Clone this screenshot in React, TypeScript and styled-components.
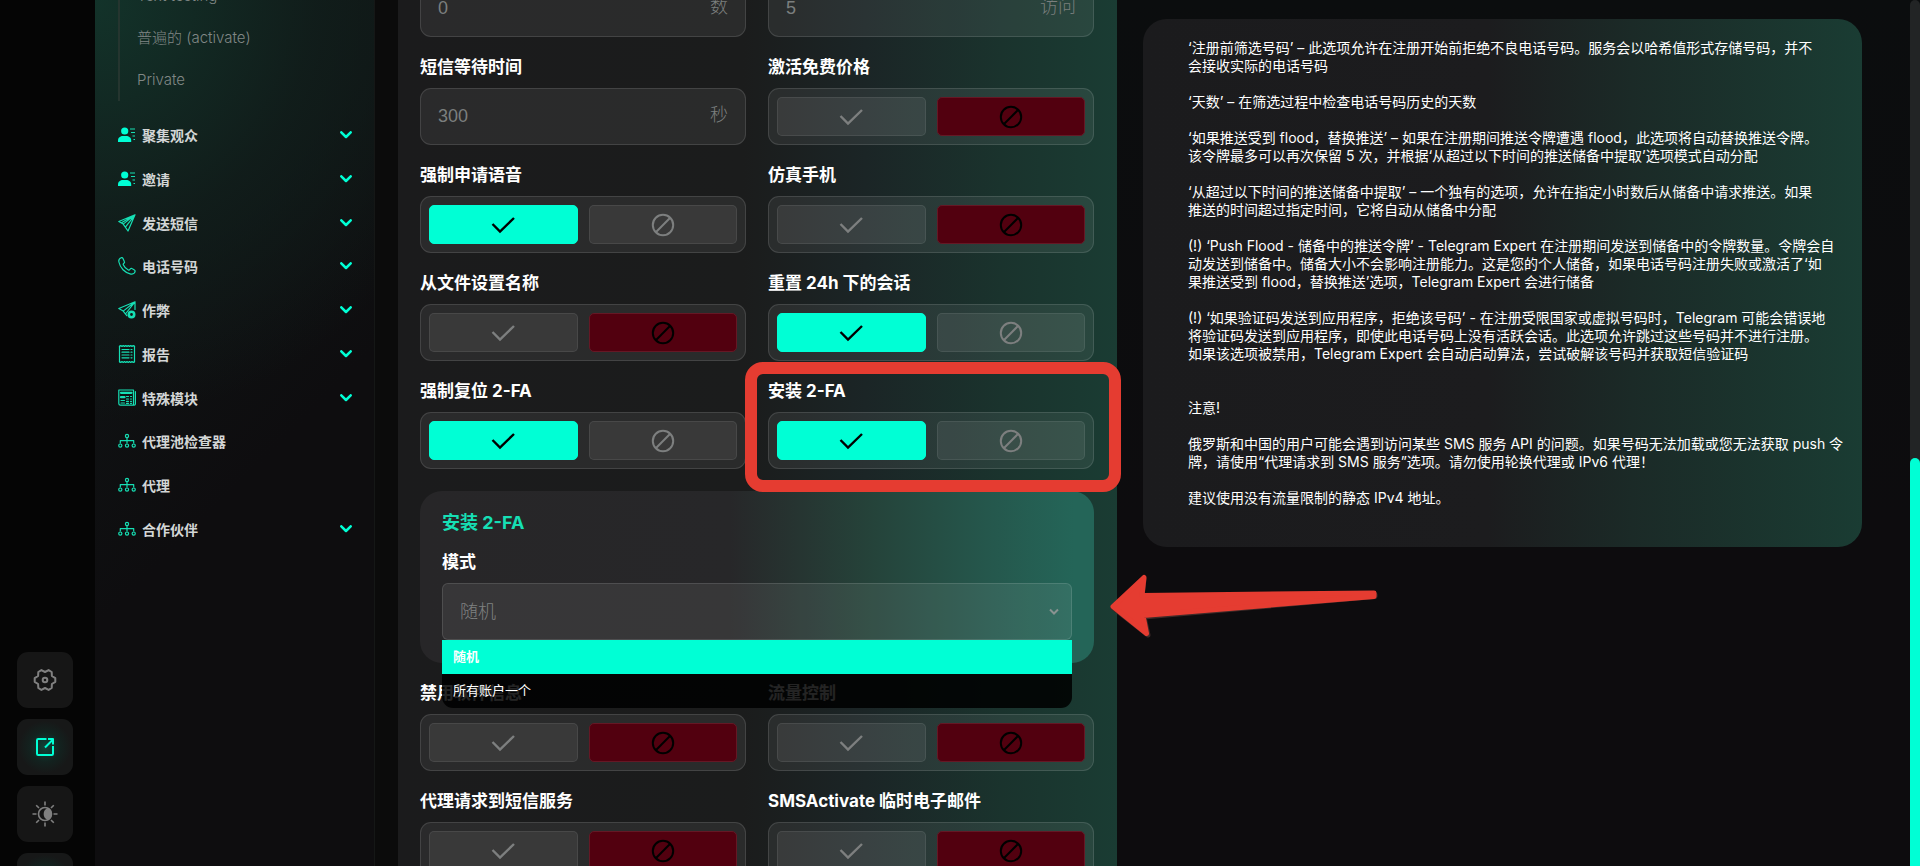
import React, { useId, useState } from "react";
import styled, { createGlobalStyle, css } from "styled-components";

const accent = "#00ffd5";
const accentSoft = "#16dfb4";
const sans = `Inter, "Noto Sans CJK SC", sans-serif`;

const GlobalStyle = createGlobalStyle`
  *, *::before, *::after { box-sizing: border-box; }
  body { margin: 0; background: #0c0d0e; color: #fff; font-family: ${sans}; }
  button, input, select { font-family: inherit; }
`;

/* ---------- shell ---------- */

const Page = styled.div`
  display: flex;
  height: 100vh;
  overflow: hidden;
  background: linear-gradient(180deg, #0b0d0e 0%, #0d0c0e 60%);
`;

const Rail = styled.aside`
  display: flex;
  flex-direction: column;
  flex: 0 0 95px;
  justify-content: flex-end;
  align-items: flex-start;
  gap: 11px;
  padding-left: 17px;
  background: #050505;
`;

const RailButton = styled.button<{ $active?: boolean; $cut?: boolean }>`
  display: grid;
  place-items: center;
  flex: none;
  width: 56px;
  height: 56px;
  margin-bottom: ${(p) => (p.$cut ? "-43px" : "0")};
  padding: 0;
  border: 0;
  border-radius: 11px;
  color: ${(p) => (p.$active ? accent : "#808080")};
  background: ${(p) =>
    p.$active
      ? "radial-gradient(circle, #104237 0%, #13221f 38%, #171818 66%)"
      : "#161616"};
`;

const Sidebar = styled.nav`
  flex: 0 0 280px;
  padding: 0 22px 0 23px;
  border-right: 1px solid #151716;
  background:
    radial-gradient(ellipse 400px 420px at 0 0, #13332a 0%, rgba(17, 31, 28, 0.8) 55%, rgba(15, 15, 17, 0) 100%),
    linear-gradient(135deg, #101615 0%, #0f1213 30%, #0e0d0f 55%);
`;

const SubList = styled.ul`
  margin: -25px 0 15px;
  padding: 0 0 0 17px;
  border-left: 2px solid #25352f;
  list-style: none;
`;

const SubLink = styled.a`
  display: block;
  color: #808785;
  font-size: 15px;
  font-weight: 300;
  line-height: 42px;
  text-decoration: none;
`;

const NavList = styled.ul`
  display: flex;
  flex-direction: column;
  justify-content: space-between;
  height: 432px;
  margin: 0;
  padding: 0;
  list-style: none;
`;

const NavLink = styled.a`
  display: flex;
  align-items: center;
  gap: 6px;
  height: 38px;
  color: #d3d6d6;
  font-size: 14px;
  font-weight: 700;
  text-decoration: none;

  svg { flex: none; color: ${accentSoft}; }
  span { flex: 1; }
`;

const Gutter = styled.div`
  flex: 0 0 23px;
  background: #0b0b0b;
`;

const Main = styled.main`
  display: grid;
  flex: 1;
  grid-template-columns: repeat(2, minmax(0, 1fr));
  align-items: start;
  gap: 26px;
  min-width: 0;
  padding-right: 48px;
`;

const ScrollTrack = styled.div`
  flex: 0 0 10px;
  padding-top: 458px;
  border-radius: 5px 5px 0 0;
  background: #222425;
`;

const ScrollThumb = styled.div`
  height: 100%;
  border-radius: 5px 5px 0 0;
  background: ${accent};
`;

/* ---------- form ---------- */

const FormPanel = styled.form`
  display: grid;
  grid-template-columns: repeat(2, minmax(0, 1fr));
  align-items: start;
  gap: 22px;
  margin-top: -20px;
  padding: 0 23px 22px 22px;
  background: linear-gradient(90deg, #1b1b1c 0%, #1b1c1c 48%, #1b2526 65%, #1a332d 84%, #1a3c33 100%);
`;

const Field = styled.div`
  position: relative;
  display: flex;
  flex-direction: column;
  gap: 12px;
`;

const labelText = css`
  color: #fff;
  font-size: 17px;
  font-weight: 700;
  line-height: 17px;
  white-space: nowrap;
`;

const FieldLabel = styled.label`${labelText}`;
const GroupLabel = styled.div`${labelText}`;

const box = css`
  height: 57px;
  border: 1px solid rgba(255, 255, 255, 0.12);
  border-radius: 11px;
  background: rgba(255, 255, 255, 0.065);
`;

const InputBox = styled.div`
  ${box}
  display: flex;
  align-items: center;
  padding: 0 17px;
  color: #7b7f7e;
  font-family: "Liberation Sans", "Noto Sans CJK SC", sans-serif;
  font-size: 18px;
  font-weight: 300;
`;

const Unit = styled.span`
  padding-bottom: 3px;
  line-height: 20px;
`;

const TextInput = styled.input`
  flex: 1;
  min-width: 0;
  padding: 0;
  border: 0;
  outline: 0;
  background: none;
  color: inherit;
  font-size: 18px;
  &::placeholder { color: inherit; opacity: 1; }
`;

const ToggleBox = styled.div`
  ${box}
  display: grid;
  grid-template-columns: 1fr 1fr;
  gap: 11px;
  padding: 8px;
`;

const ToggleOption = styled.label<{ $state: "off" | "yes" | "no" }>`
  position: relative;
  display: grid;
  place-items: center;
  border: 1px solid transparent;
  border-radius: 5px;
  cursor: pointer;

  ${(p) =>
    p.$state === "yes"
      ? css`color: #000; border-color: ${accent}; background: ${accent};`
      : p.$state === "no"
      ? css`color: #000; border-color: #651825; background: #52000f;`
      : css`color: #7d7f7f; border-color: rgba(255, 255, 255, 0.08); background: rgba(255, 255, 255, 0.07);`}

  input {
    position: absolute;
    inset: 0;
    margin: 0;
    opacity: 0;
    cursor: pointer;
  }
`;

const Highlight = styled.div`
  position: absolute;
  z-index: 3;
  inset: -21px -27px -23px -23px;
  border: 12px solid #e53c31;
  border-radius: 18px;
  pointer-events: none;
`;

const Card = styled.section`
  grid-column: 1 / -1;
  display: flex;
  flex-direction: column;
  gap: 22px;
  padding: 22px 22px 23px;
  border-radius: 22px;
  background: linear-gradient(90deg, #272628 0%, #272729 46%, #25433a 67%, #25584d 85%, #246558 97%);
`;

const CardTitle = styled.h2`
  margin: 0;
  color: ${accentSoft};
  font-size: 18px;
  font-weight: 700;
  line-height: 19px;
`;

const SelectWrap = styled.div`
  position: relative;
  > svg {
    position: absolute;
    top: 25px;
    right: 13px;
    color: #8a9391;
    pointer-events: none;
  }
`;

const Select = styled.select`
  display: block;
  width: 100%;
  height: 57px;
  padding: 0 17px;
  appearance: none;
  border: 1px solid rgba(255, 255, 255, 0.12);
  border-radius: 6px;
  outline: 0;
  background: rgba(255, 255, 255, 0.075);
  color: #7f8181;
  font-size: 18px;
  font-weight: 300;
`;

const Options = styled.div`
  position: absolute;
  z-index: 2;
  top: 100%;
  right: 0;
  left: 0;
  overflow: hidden;
  border-radius: 0 0 11px 11px;
`;

const Option = styled.div<{ $selected: boolean }>`
  padding: 0 11px 2px;
  background: ${(p) => (p.$selected ? accent : "rgba(0, 0, 0, 0.86)")};
  color: #fff;
  font-size: 13px;
  font-weight: ${(p) => (p.$selected ? 700 : 400)};
  line-height: 32px;
`;

/* ---------- notes ---------- */

const Notes = styled.article`
  margin-top: 19px;
  padding: 20px 20px 22px 45px;
  border-radius: 24px;
  background: linear-gradient(90deg, #1b1b1d 0%, #1c1c1e 48%, #1b2a27 68%, #1a3c33 100%);
  font-size: 14px;
  line-height: 18px;
  white-space: nowrap;

  p { margin: 0 0 18px; }
  p.gap { margin-bottom: 36px; }
`;

const Arrow = styled.svg`
  position: absolute;
  z-index: 4;
  top: 574px;
  left: calc(50% + 150px);
`;

/* ---------- drawings ---------- */

const Stroke = ({ s = 18, w = 1, children }: { s?: number; w?: number; children: React.ReactNode }) => (
  <svg width={s} height={s} viewBox="0 0 18 18" fill="none" stroke="currentColor" strokeWidth={w} strokeLinejoin="round" strokeLinecap="round" aria-hidden="true">
    {children}
  </svg>
);

const icons = {
  people: (
    <svg width="18" height="18" viewBox="0 0 18 18" fill={accent} aria-hidden="true">
      <circle cx="6.7" cy="5" r="3.6" />
      <path d="M0 16v-1.400c0-3 2.300-4.600 5-4.600h3.200c2.700 0 5 1.600 5 4.600V16z" />
      <path d="M12 3h5M13 6.500h4M14.500 10h2.500M15.500 13.500h1.500" stroke={accentSoft} strokeWidth="1.200" />
    </svg>
  ),
  plane: (
    <Stroke w={1.2}><path d="M17 .8.800 7.500l4.400 2.600L10 17 17 .8zM17 .8 5.200 10.100M17 .8 7.400 13.200M17 .8 3.500 8.800" /></Stroke>
  ),
  phone: (
    <Stroke w={1.2}><path d="M3.300.7C1.500 1.300.5 3 .9 5c1.200 5.800 5.800 10.800 11.900 12.100 2 .3 4-.8 4.300-2.700.1-.6-.2-1.100-.7-1.400l-2.500-1.400c-.5-.3-1.100-.2-1.500.2l-1 1c-.3.300-.7.400-1.100.2C7.900 11.800 6.300 10 5.300 7.700c-.2-.4-.1-.8.200-1.100l.6-.6c.4-.4.500-1 .2-1.500L5 1.500C4.700.8 4 .5 3.300.7z" /></Stroke>
  ),
  planePlus: (
    <Stroke w={1.2}>
      <path d="M17 .8.800 7.500l4.400 2.600 3.600 4.600M17 .8 5.200 10.100M17 .8 7.400 13M17 .8v7.700" />
      <circle cx="13.500" cy="13.500" r="2.700" strokeWidth="2.600" />
    </Stroke>
  ),
  report: (
    <Stroke w={1.2}>
      <path d="M1.500 1v16M16.500 1v16" />
      <path d="M1.500 1.500l1.250-1 1.250 1 1.250-1 1.250 1 1.250-1L9 1.500l1.250-1 1.250 1 1.250-1 1.250 1 1.250-1 1.250 1M1.500 16.500l1.250 1 1.250-1 1.250 1 1.250-1 1.250 1L9 16.500l1.250 1 1.250-1 1.250 1 1.250-1 1.250 1 1.250-1" />
      <path d="M4 4.500h7M4 7.200h7M4 10h7M4 12.800h7M13 4.500h1M13 7.200h1M13 10h1M13 12.800h1" />
    </Stroke>
  ),
  modules: (
    <Stroke w={1.2}>
      <path d="M15.500 15.500V1H.8v13.500c0 1 .7 1.700 1.700 1.700h13.700c.7 0 1.200-.5 1.200-1.200V2.500" />
      <path d="M3 3.800h10.500M3 8.200h3.500" strokeWidth="2.200" />
      <path d="M3 11.500h3.500M3 14h3.500M8.500 7.500h2M8.500 10h2M8.500 12.300h2M8.500 14.300h2M12.500 7.500h1M12.500 10h1M12.500 12.300h1M12.500 14.300h1" />
    </Stroke>
  ),
  tree: (
    <Stroke w={1.2}>
      <circle cx="9" cy="4" r="1.600" />
      <path d="M9 5.600v5.400M2.300 11V8.600h13.400V11" />
      <circle cx="2.300" cy="13.600" r="1.600" />
      <circle cx="9" cy="13.600" r="1.600" />
      <circle cx="15.700" cy="13.600" r="1.600" />
    </Stroke>
  ),
};

const NavChevron = () => (
  <svg width="12" height="8" viewBox="0 0 12 8" fill="none" stroke={accent} strokeWidth="2.500" strokeLinecap="round" strokeLinejoin="round" aria-hidden="true">
    <path d="M1.300 1.300 6 6l4.700-4.700" />
  </svg>
);

const CheckIcon = () => (
  <svg width="24" height="18" viewBox="0 0 24 18" fill="none" stroke="currentColor" strokeWidth="2.400" aria-hidden="true">
    <path d="M1.500 8 9 15.500 23 2" />
  </svg>
);

const BanIcon = () => (
  <svg width="24" height="24" viewBox="0 0 24 24" fill="none" stroke="currentColor" strokeWidth="2" aria-hidden="true">
    <circle cx="12" cy="12" r="10.200" />
    <path d="M4.800 19.200 19.200 4.800" />
  </svg>
);

const GearIcon = () => (
  <svg width="24" height="24" viewBox="0 0 24 24" fill="none" stroke="currentColor" strokeWidth="2" strokeLinejoin="round" aria-hidden="true">
    <path d="M22.300 13.800 18.900 16l-.2 4-3.100 1.900L12 20l-3.600 1.900L5.300 20l-.2-4-3.400-2.200v-3.600L5.100 8l.2-4 3.100-1.900L12 4l3.600-1.900L18.700 4l.2 4 3.400 2.200z" />
    <circle cx="12" cy="12" r="2.300" />
  </svg>
);

const ShareIcon = () => (
  <svg width="20" height="20" viewBox="0 0 20 20" fill="none" stroke="currentColor" strokeWidth="2" strokeLinejoin="round" aria-hidden="true">
    <path d="M11.500 2H3.200C2.500 2 2 2.500 2 3.200v13.600c0 .7.500 1.200 1.200 1.200h13.600c.7 0 1.200-.5 1.200-1.200V9M10 10.500 17.500 3M13 2h5v5.500" />
  </svg>
);

const ThemeIcon = () => (
  <svg width="26" height="26" viewBox="0 0 26 26" fill="none" stroke="currentColor" strokeWidth="1.600" aria-hidden="true">
    <circle cx="13" cy="13" r="6.500" />
    <path d="M16.200 7.700a6.500 6.500 0 0 1 0 10.600c-5-1.800-5-8.800 0-10.600z" fill="currentColor" />
    <path d="M13 .5v4M13 21.500v4M.5 13h4M21.500 13h4M4.200 4.200 7 7M19 19l2.800 2.800M21.800 4.200 19 7M7 19l-2.800 2.800" />
  </svg>
);

/* ---------- parts ---------- */

function InputField({ label, name, value, unit }: { label?: string; name: string; value: string; unit: string }) {
  const id = useId();
  return (
    <Field>
      {label && <FieldLabel htmlFor={id}>{label}</FieldLabel>}
      <InputBox>
        <TextInput id={id} name={name} placeholder={value} aria-label={label ? undefined : unit} />
        <Unit>{unit}</Unit>
      </InputBox>
    </Field>
  );
}

function ToggleField({ label, initial, highlighted }: { label: string; initial: boolean; highlighted?: boolean }) {
  const id = useId();
  const [on, setOn] = useState(initial);
  return (
    <Field>
      <GroupLabel id={id}>{label}</GroupLabel>
      <ToggleBox role="radiogroup" aria-labelledby={id}>
        <ToggleOption $state={on ? "yes" : "off"}>
          <input type="radio" name={id} aria-label="是" checked={on} onChange={() => setOn(true)} />
          <CheckIcon />
        </ToggleOption>
        <ToggleOption $state={on ? "off" : "no"}>
          <input type="radio" name={id} aria-label="否" checked={!on} onChange={() => setOn(false)} />
          <BanIcon />
        </ToggleOption>
      </ToggleBox>
      {highlighted && <Highlight />}
    </Field>
  );
}

const modes = ["随机", "所有账户一个"];

function ModeCard() {
  const [mode, setMode] = useState(modes[0]);
  return (
    <Card>
      <CardTitle>安装 2-FA</CardTitle>
      <Field>
        <FieldLabel htmlFor="mode">模式</FieldLabel>
        <SelectWrap>
          <Select id="mode" value={mode} onChange={(e) => setMode(e.target.value)}>
            {modes.map((m) => <option key={m}>{m}</option>)}
          </Select>
          <svg width="10" height="8" viewBox="0 0 10 8" fill="none" stroke="currentColor" strokeWidth="2" aria-hidden="true">
            <path d="M1 1.500 5 5.500l4-4" />
          </svg>
          <Options role="listbox" aria-label="模式">
            {modes.map((m) => (
              <Option key={m} role="option" aria-selected={m === mode} $selected={m === mode} onClick={() => setMode(m)}>
                {m}
              </Option>
            ))}
          </Options>
        </SelectWrap>
      </Field>
    </Card>
  );
}

const navItems: { icon: keyof typeof icons; text: string; opens: boolean }[] = [
  { icon: "people", text: "聚集观众", opens: true },
  { icon: "people", text: "邀请", opens: true },
  { icon: "plane", text: "发送短信", opens: true },
  { icon: "phone", text: "电话号码", opens: true },
  { icon: "planePlus", text: "作弊", opens: true },
  { icon: "report", text: "报告", opens: true },
  { icon: "modules", text: "特殊模块", opens: true },
  { icon: "tree", text: "代理池检查器", opens: false },
  { icon: "tree", text: "代理", opens: false },
  { icon: "tree", text: "合作伙伴", opens: true },
];

const notes: { lines: string[]; gap?: boolean }[] = [
  { lines: ["‘注册前筛选号码’ – 此选项允许在注册开始前拒绝不良电话号码。服务会以哈希值形式存储号码，并不", "会接收实际的电话号码"] },
  { lines: ["‘天数’ – 在筛选过程中检查电话号码历史的天数"] },
  { lines: ["‘如果推送受到 flood，替换推送’ – 如果在注册期间推送令牌遭遇 flood，此选项将自动替换推送令牌。", "该令牌最多可以再次保留 5 次，并根据‘从超过以下时间的推送储备中提取’选项模式自动分配"] },
  { lines: ["‘从超过以下时间的推送储备中提取’ – 一个独有的选项，允许在指定小时数后从储备中请求推送。如果", "推送的时间超过指定时间，它将自动从储备中分配"] },
  { lines: ["(!) ‘Push Flood - 储备中的推送令牌’ - Telegram Expert 在注册期间发送到储备中的令牌数量。令牌会自", "动发送到储备中。储备大小不会影响注册能力。这是您的个人储备，如果电话号码注册失败或激活了‘如", "果推送受到 flood，替换推送’选项，Telegram Expert 会进行储备"] },
  { lines: ["(!) ‘如果验证码发送到应用程序，拒绝该号码’ - 在注册受限国家或虚拟号码时，Telegram 可能会错误地", "将验证码发送到应用程序，即使此电话号码上没有活跃会话。此选项允许跳过这些号码并不进行注册。", "如果该选项被禁用，Telegram Expert 会自动启动算法，尝试破解该号码并获取短信验证码"], gap: true },
  { lines: ["注意!"] },
  { lines: ["俄罗斯和中国的用户可能会遇到访问某些 SMS 服务 API 的问题。如果号码无法加载或您无法获取 push 令", "牌，请使用“代理请求到 SMS 服务”选项。请勿使用轮换代理或 IPv6 代理！"] },
  { lines: ["建议使用没有流量限制的静态 IPv4 地址。"] },
];

export default function App() {
  return (
    <>
      <GlobalStyle />
      <Page>
        <Rail>
          <RailButton aria-label="设置"><GearIcon /></RailButton>
          <RailButton $active aria-label="打开"><ShareIcon /></RailButton>
          <RailButton aria-label="主题"><ThemeIcon /></RailButton>
          <RailButton $active $cut aria-label="更多" />
        </Rail>
        <Sidebar>
          <SubList>
            <li><SubLink href="#testing">Text testing</SubLink></li>
            <li><SubLink href="#activate">普遍的 (activate)</SubLink></li>
            <li><SubLink href="#private">Private</SubLink></li>
          </SubList>
          <NavList>
            {navItems.map((n) => (
              <li key={n.text}>
                <NavLink href="#">
                  {icons[n.icon]}
                  <span>{n.text}</span>
                  {n.opens && <NavChevron />}
                </NavLink>
              </li>
            ))}
          </NavList>
        </Sidebar>
        <Gutter />
        <Main>
          <FormPanel>
            <InputField name="days" value="0" unit="数" />
            <InputField name="visits" value="5" unit="访问" />
            <InputField name="wait" label="短信等待时间" value="300" unit="秒" />
            <ToggleField label="激活免费价格" initial={false} />
            <ToggleField label="强制申请语音" initial />
            <ToggleField label="仿真手机" initial={false} />
            <ToggleField label="从文件设置名称" initial={false} />
            <ToggleField label="重置 24h 下的会话" initial />
            <ToggleField label="强制复位 2-FA" initial />
            <ToggleField label="安装 2-FA" initial highlighted />
            <ModeCard />
            <ToggleField label="禁用软件信息" initial={false} />
            <ToggleField label="流量控制" initial={false} />
            <ToggleField label="代理请求到短信服务" initial={false} />
            <ToggleField label="SMSActivate 临时电子邮件" initial={false} />
          </FormPanel>
          <Notes>
            {notes.map((n) => (
              <p key={n.lines[0]} className={n.gap ? "gap" : undefined}>
                {n.lines.map((l, i) => (
                  <React.Fragment key={l}>
                    {i > 0 && <br />}
                    {l}
                  </React.Fragment>
                ))}
              </p>
            ))}
          </Notes>
        </Main>
        <ScrollTrack><ScrollThumb /></ScrollTrack>
        <Arrow width="270" height="64" viewBox="0 0 270 64" aria-hidden="true">
          <g strokeWidth="5" strokeLinejoin="round">
            <path d="M3 33.500 34 5l-2 18 233-2.500v2L34 43l4 18z" fill="#3d2a28" stroke="#3d2a28" />
            <path d="M3 32.500 34 3.500l-2 18L264 19v3.500L33 41.500l3.500 18z" fill="#e53c31" stroke="#e53c31" />
          </g>
        </Arrow>
      </Page>
    </>
  );
}
